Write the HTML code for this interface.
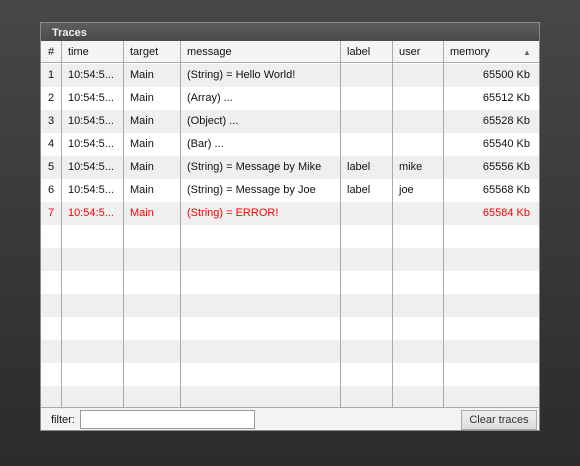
<!DOCTYPE html>
<html><head><style>
*{margin:0;padding:0;box-sizing:border-box}
body{width:580px;height:466px;overflow:hidden;background:linear-gradient(#474747,#2b2b2b);font-family:"Liberation Sans",sans-serif;font-size:11px;color:#111;position:relative}
#p{position:absolute;left:40px;top:22px;width:500px;height:409px;background:#fff;border:1px solid #8a8a8a}
#t{position:absolute;left:0;top:0;width:498px;height:18px;background:linear-gradient(#5d5d5d,#4a4a4a);color:#eee;font-weight:bold;font-size:11px;line-height:20px;padding-left:11px}
#h{position:absolute;left:0;top:18px;width:498px;height:22px;background:#f4f4f4;border-bottom:1px solid #aaa}
.r{position:absolute;left:0;width:498px;height:23px}
.g{background:#efefef}
.c{position:absolute;line-height:23px;white-space:nowrap}
#h .c{line-height:23px}
.v{position:absolute;top:18px;width:1px;height:366px;background:#aaa}
.red{color:#f00}
#f{position:absolute;left:0;top:384px;width:498px;height:23px;background:#f3f3f3;border-top:1px solid #aaa}
</style></head><body>
<div id="p">
<div id="t">Traces</div>
<div id="h">
<span class="c" style="left:7px">#</span><span class="c" style="left:27px">time</span><span class="c" style="left:89px">target</span><span class="c" style="left:146px">message</span><span class="c" style="left:306px">label</span><span class="c" style="left:358px">user</span><span class="c" style="left:409px">memory</span><span class="c" style="left:482px;font-size:8px;color:#666">▲</span>
</div>
<div class="r g" style="top:41px"><span class="c" style="left:7px">1</span><span class="c" style="left:27px">10:54:5...</span><span class="c" style="left:89px">Main</span><span class="c" style="left:146px">(String) = Hello World!</span><span class="c" style="right:9px">65500 Kb</span></div>
<div class="r" style="top:64px"><span class="c" style="left:7px">2</span><span class="c" style="left:27px">10:54:5...</span><span class="c" style="left:89px">Main</span><span class="c" style="left:146px">(Array) ...</span><span class="c" style="right:9px">65512 Kb</span></div>
<div class="r g" style="top:87px"><span class="c" style="left:7px">3</span><span class="c" style="left:27px">10:54:5...</span><span class="c" style="left:89px">Main</span><span class="c" style="left:146px">(Object) ...</span><span class="c" style="right:9px">65528 Kb</span></div>
<div class="r" style="top:110px"><span class="c" style="left:7px">4</span><span class="c" style="left:27px">10:54:5...</span><span class="c" style="left:89px">Main</span><span class="c" style="left:146px">(Bar) ...</span><span class="c" style="right:9px">65540 Kb</span></div>
<div class="r g" style="top:133px"><span class="c" style="left:7px">5</span><span class="c" style="left:27px">10:54:5...</span><span class="c" style="left:89px">Main</span><span class="c" style="left:146px">(String) = Message by Mike</span><span class="c" style="left:306px">label</span><span class="c" style="left:358px">mike</span><span class="c" style="right:9px">65556 Kb</span></div>
<div class="r" style="top:156px"><span class="c" style="left:7px">6</span><span class="c" style="left:27px">10:54:5...</span><span class="c" style="left:89px">Main</span><span class="c" style="left:146px">(String) = Message by Joe</span><span class="c" style="left:306px">label</span><span class="c" style="left:358px">joe</span><span class="c" style="right:9px">65568 Kb</span></div>
<div class="r g red" style="top:179px"><span class="c" style="left:7px">7</span><span class="c" style="left:27px">10:54:5...</span><span class="c" style="left:89px">Main</span><span class="c" style="left:146px">(String) = ERROR!</span><span class="c" style="right:9px">65584 Kb</span></div>
<div class="r g" style="top:225px"></div>
<div class="r g" style="top:271px"></div>
<div class="r g" style="top:317px"></div>
<div class="r g" style="top:363px;height:21px"></div>
<div class="v" style="left:20px"></div><div class="v" style="left:82px"></div><div class="v" style="left:139px"></div><div class="v" style="left:299px"></div><div class="v" style="left:351px"></div><div class="v" style="left:402px"></div>
<div id="f">
<span class="c" style="left:10px;line-height:24px">filter:</span>
<div style="position:absolute;left:39px;top:2px;width:175px;height:19px;background:#fff;border:1px solid #999"></div>
<div style="position:absolute;left:420px;top:2px;width:76px;height:20px;background:linear-gradient(#eee,#ddd);border:1px solid #aaa;color:#333;text-align:center;line-height:18px">Clear traces</div>
</div>
</div>
</body></html>
